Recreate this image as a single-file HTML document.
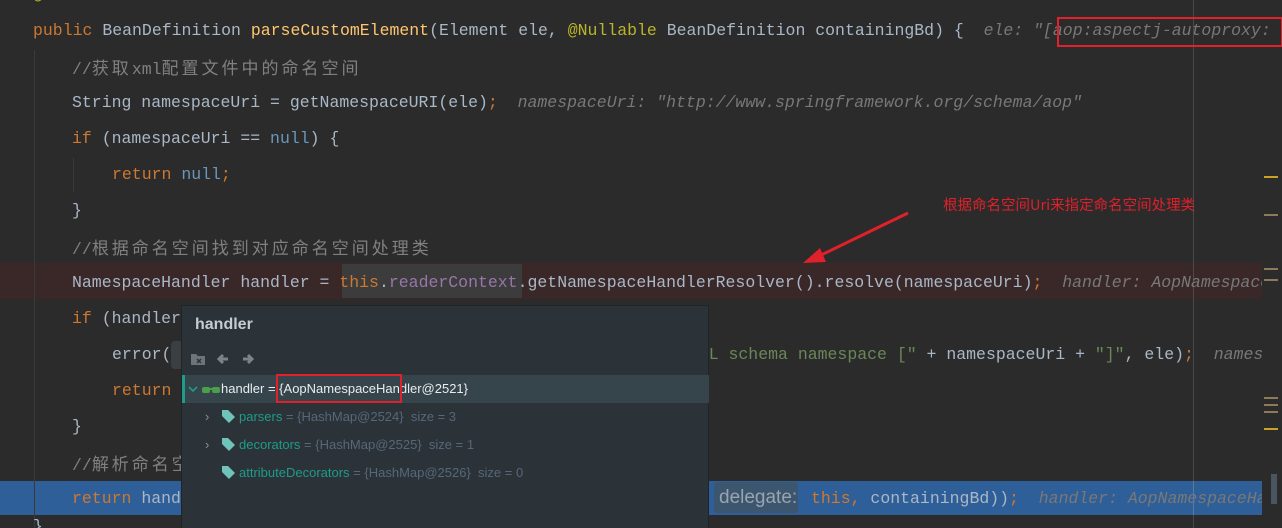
<!DOCTYPE html>
<html style="margin:0;width:1282px;height:528px;overflow:hidden"><head><meta charset="utf-8"><style>
body{margin:0;width:1282px;height:528px;overflow:hidden;background:#2b2b2b;position:relative;font-family:"Liberation Mono",monospace;font-size:16.5px;color:#a9b7c6}
#clip{position:absolute;left:0;top:0;width:1262px;height:528px;overflow:hidden}
.l{position:absolute;white-space:pre;height:36px;line-height:36px}
.k{color:#cc7832}.m{color:#ffc66d}.c{color:#808080}.n{color:#6897bb}.a{color:#bbb529}.s{color:#6a8759}.f{color:#9876aa}
.h{color:#787878;font-style:italic}
.z{font-family:"Noto Sans CJK SC",sans-serif;font-size:17px;letter-spacing:3px}
.row{position:absolute;left:0;width:1262px;height:36px}
.pop{position:absolute;left:181px;top:305px;width:526px;height:223px;background:#2b3338;border:1px solid #1f2428;font-family:"Liberation Sans",sans-serif;font-size:13px}
.pop .t{position:absolute;white-space:pre}
</style></head><body>
<div id="clip">
<div class="row" style="top:263px;background:#3a2828"></div>
<div class="row" style="top:481px;height:34px;background:#2f5f98"></div>
<div style="position:absolute;left:342px;top:264px;width:180px;height:34px;background:#3c3c3c"></div>
<div style="position:absolute;left:34px;top:50px;width:1px;height:478px;background:#3a3a3a"></div>
<div style="position:absolute;left:73px;top:158px;width:1px;height:34px;background:#3a3a3a"></div>
<div style="position:absolute;left:1193px;top:0;width:1px;height:528px;background:#4a4a4a"></div>

<div class="l a" style="left:33px;top:-23px">@Override</div>
<div class="l c" style="left:72px;top:49px">//<span class="z">获取</span>xml<span class="z">配置文件中的命名空间</span></div>
<div class="l" style="left:72px;top:85px">String namespaceUri = getNamespaceURI(ele)<span class="k">;</span>  <span class="h">namespaceUri: "http://www.springframework.org/schema/aop"</span></div>
<div class="l" style="left:72px;top:121px"><span class="k">if </span>(namespaceUri == <span class="n">null</span>) {</div>
<div class="l" style="left:112px;top:157px"><span class="k">return </span><span class="n">null</span><span class="k">;</span></div>
<div class="l" style="left:72px;top:193px">}</div>
<div class="l c" style="left:72px;top:229px">//<span class="z">根据命名空间找到对应命名空间处理类</span></div>
<div class="l" style="left:72px;top:265px">NamespaceHandler handler = <span class="k">this</span>.<span class="f">readerContext</span>.getNamespaceHandlerResolver().resolve(namespaceUri)<span class="k">;</span>  <span class="h">handler: AopNamespaceHandler@2521</span></div>
<div class="l" style="left:72px;top:301px"><span class="k">if </span>(handler == <span class="n">null</span>) {</div>
<div class="l" style="left:112px;top:337px">error(<span style="display:inline-block;width:62px;height:28px;vertical-align:middle;background:#3b3f42;border-radius:4px"></span><span class="s">"Unable to locate Spring NamespaceHandler for XML schema namespace ["</span> + namespaceUri + <span class="s">"]"</span>, ele)<span class="k">;</span>  <span class="h">namespaceUri</span></div>
<div class="l" style="left:112px;top:373px"><span class="k">return </span><span class="n">null</span><span class="k">;</span></div>
<div class="l" style="left:72px;top:409px">}</div>
<div class="l c" style="left:72px;top:445px">//<span class="z">解析命名空间</span></div>
<div class="l" style="left:72px;top:481px"><span class="k">return </span>handler.parse(</div>
<div style="position:absolute;left:714px;top:482px;width:79px;height:31px;background:#3d5670;border-radius:4px;color:#9aa4ad;font-family:'Liberation Sans',sans-serif;font-size:19px;line-height:31px;padding-left:5px">delegate:</div>
<div class="l" style="left:811px;top:481px"><span class="k">this, </span>containingBd))<span class="k">;</span>  <span class="h">handler: AopNamespaceHandler@2521</span></div>
<div style="position:absolute;left:1193px;top:481px;width:1px;height:34px;background:#5a7aa0"></div>
<div class="l" style="left:33px;top:509px">}</div>
</div>
<div style="position:absolute;left:0;top:0;width:1282px;height:50px;overflow:hidden">
<div class="l" style="left:33px;top:13px"><span class="k">public </span>BeanDefinition <span class="m">parseCustomElement</span>(Element ele, <span class="a">@Nullable</span> BeanDefinition containingBd) {  <span class="h">ele: "[aop:aspectj-autoproxy: null]"</span></div>
</div>
<div style="position:absolute;left:1057px;top:17px;width:222px;height:26px;border:2px solid #e0202a"></div>

<div style="position:absolute;left:943px;top:194px;color:#e0202a;font-family:'Noto Sans CJK SC',sans-serif;font-size:14.5px;white-space:pre">根据命名空间Uri来指定命名空间处理类</div>
<svg style="position:absolute;left:0;top:0" width="1282" height="528"><line x1="908" y1="213" x2="815" y2="258" stroke="#e0202a" stroke-width="3"/><polygon points="803,263 820,248 826,262" fill="#e0202a"/>
<g fill="#8c7a5a"><rect x="1264" y="176" width="14" height="2" fill="#c9a227"/><rect x="1264" y="214" width="14" height="2"/><rect x="1264" y="268" width="14" height="2"/><rect x="1264" y="279" width="14" height="2"/><rect x="1264" y="397" width="14" height="2"/><rect x="1264" y="404" width="14" height="2"/><rect x="1264" y="411" width="14" height="2"/><rect x="1264" y="428" width="14" height="2" fill="#c9a227"/></g>
<rect x="1271" y="474" width="6" height="30" fill="#4a5560"/></svg>

<div class="pop">
<div class="t" style="left:13px;top:10px;font-size:16px;font-weight:bold;color:#c5ccd2">handler</div>
<svg style="position:absolute;left:8px;top:45px" width="80" height="16"><path d="M1 3h5l2 2h7v9H1z" fill="#6f7478"/><path d="M7 8l4 4M11 8l-4 4" stroke="#2b3338" stroke-width="1.5"/><path d="M29 8h9M33 4l-4 4 4 4" stroke="#7d8387" stroke-width="3" fill="none"/><path d="M53 8h9M58 4l4 4-4 4" stroke="#7d8387" stroke-width="3" fill="none"/></svg>
<div style="position:absolute;left:0;top:69px;width:524px;height:28px;background:#36444c;border-left:3px solid #1e9b8a"></div>
<svg style="position:absolute;left:6px;top:77px" width="36" height="14"><path d="M1 4l4 4 4-4" stroke="#1e9b8a" stroke-width="1.6" fill="none"/><rect x="14" y="4" width="8" height="6" rx="2" fill="#4aa04a"/><rect x="24" y="4" width="8" height="6" rx="2" fill="#4aa04a"/><rect x="20" y="5" width="6" height="2" fill="#4aa04a"/></svg>
<div class="t" style="left:39px;top:75px;color:#e8ecef">handler = {AopNamespaceHandler@2521}</div>
<div style="position:absolute;left:94px;top:68px;width:122px;height:25px;border:2px solid #e0202a"></div>
<div class="t" style="left:23px;top:103px;color:#8a9095">›</div>
<div class="t" style="left:23px;top:131px;color:#8a9095">›</div>
<svg style="position:absolute;left:38px;top:102px" width="16" height="80"><g fill="#6fc3b8"><path d="M2 2h6l7 7-6 6-7-7z"/><path d="M2 30h6l7 7-6 6-7-7z"/><path d="M2 58h6l7 7-6 6-7-7z"/></g></svg>
<div class="t" style="left:57px;top:103px;color:#56677a"><span style="color:#1e9b8a">parsers</span> = {HashMap@2524}  size = 3</div>
<div class="t" style="left:57px;top:131px;color:#56677a"><span style="color:#1e9b8a">decorators</span> = {HashMap@2525}  size = 1</div>
<div class="t" style="left:57px;top:159px;color:#56677a"><span style="color:#1e9b8a">attributeDecorators</span> = {HashMap@2526}  size = 0</div>
</div>
</body></html>
